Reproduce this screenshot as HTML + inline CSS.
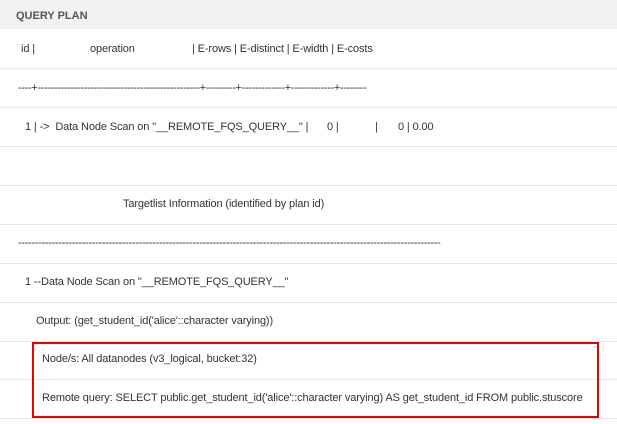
<!DOCTYPE html>
<html><head><style>
body{margin:0;width:617px;height:424px;background:#fff;font-family:"Liberation Sans",Arial,sans-serif;font-size:11px;color:#333;position:relative;overflow:hidden;letter-spacing:-0.12px}
.h{position:absolute;left:0;top:0;width:617px;height:29px;background:#f2f2f2}
.h span{position:absolute;left:16px;top:10px;font-weight:bold;color:#555;font-size:11px;letter-spacing:0}
.l{position:absolute;left:0;width:617px;height:1px;background:#e8e8e8}
.t{position:absolute;white-space:pre;line-height:13px}
.box{position:absolute;left:32px;top:342px;width:563px;height:72px;border:2px solid #e00}
</style></head><body>
<div class="h"><span>QUERY PLAN</span></div>
<div class="l" style="top:68px"></div>
<div class="l" style="top:107px"></div>
<div class="l" style="top:146px"></div>
<div class="l" style="top:185px"></div>
<div class="l" style="top:224px"></div>
<div class="l" style="top:263px"></div>
<div class="l" style="top:302px"></div>
<div class="l" style="top:341px"></div>
<div class="l" style="top:379px"></div>
<div class="l" style="top:418px"></div>
<div class="t" style="left:21px;top:43px">id |</div>
<div class="t" style="left:90px;top:43px">operation</div>
<div class="t" style="left:192px;top:43px">| E-rows | E-distinct | E-width | E-costs</div>
<div class="t" style="left:18px;top:82px;letter-spacing:-0.35px">----+-------------------------------------------------+---------+-------------+-------------+--------</div>
<div class="t" style="left:25px;top:121px">1 | -&gt;  Data Node Scan on "__REMOTE_FQS_QUERY__" |</div>
<div class="t" style="left:327px;top:121px">0 |</div>
<div class="t" style="left:375px;top:121px">|</div>
<div class="t" style="left:398px;top:121px">0 | 0.00</div>
<div class="t" style="left:123px;top:198px">Targetlist Information (identified by plan id)</div>
<div class="t" style="left:18px;top:237px;letter-spacing:-0.31px">------------------------------------------------------------------------------------------------------------------------------</div>
<div class="t" style="left:25px;top:276px">1 --Data Node Scan on "__REMOTE_FQS_QUERY__"</div>
<div class="t" style="left:36px;top:315px">Output: (get_student_id('alice'::character varying))</div>
<div class="t" style="left:42px;top:353px">Node/s: All datanodes (v3_logical, bucket:32)</div>
<div class="t" style="left:42px;top:392px">Remote query: SELECT public.get_student_id('alice'::character varying) AS get_student_id FROM public.stuscore</div>
<div class="box"></div>
</body></html>
